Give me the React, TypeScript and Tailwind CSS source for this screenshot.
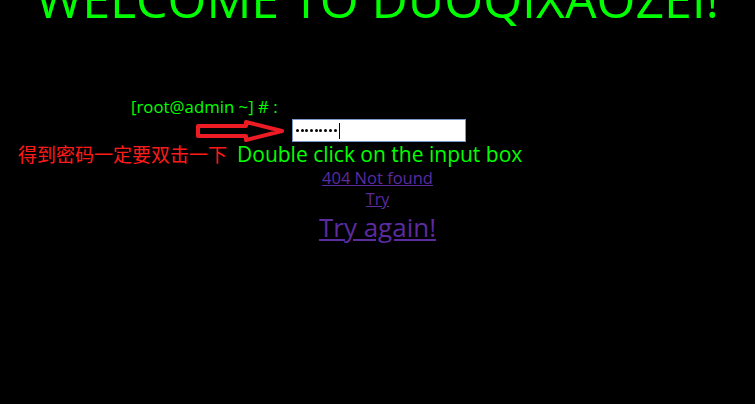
const dots = [0, 1, 2, 3, 4, 5, 6, 7, 8];

export default function App() {
  return (
    <div className="h-[404px] w-full overflow-hidden bg-black font-['Open_Sans','Noto_Sans',sans-serif]">
      {/* Title (cut off at the top edge) */}
      <h1 className="-mt-[31px] text-center text-[50px] leading-[60px] text-[#00ff00]">
        WELCOME TO DUOQIXAOZEI!
      </h1>

      {/* Prompt */}
      <div className="mt-[68px] pl-[131px] text-[16.8px] leading-[20px] text-[#00ff00]">
        [root@admin ~] # :
      </div>

      {/* Arrow + password input */}
      <div className="mt-[2px] flex items-center pl-[196px]">
        <svg width="90" height="22" viewBox="0 0 90 22" className="block">
          <path
            d="M2 6 H50 V2 L86 11 L50 20 V16 H2 Z"
            fill="none"
            stroke="#ed1c24"
            strokeWidth="4"
            strokeLinejoin="round"
          />
        </svg>
        <div className="ml-[6px] flex h-[23px] w-[174px] items-center border border-[#7a98c8] bg-white pl-[3px]">
          {dots.map((d) => (
            <span key={d} className="mr-[1.7px] h-[3px] w-[3px] rounded-full bg-black" />
          ))}
          <span className="ml-[1px] h-[16px] w-px bg-black" />
        </div>
      </div>

      {/* Hint */}
      <div className="flex items-baseline pl-[18px]">
        <span className="font-['Noto_Sans_CJK_SC',sans-serif] text-[19px] leading-[24px] text-[#ff1a1a]">
          得到密码一定要双击一下
        </span>
        <span className="ml-[10px] text-[21px] leading-[24px] text-[#00ff00]">
          Double click on the input box
        </span>
      </div>

      {/* Links */}
      <div className="mt-[2px] flex flex-col items-center text-[#5b2ba0]">
        <a href="#" className="text-[16.5px] leading-[20px] underline">
          404 Not found
        </a>
        <a href="#" className="text-[16px] leading-[22px] underline">
          Try
        </a>
        <a href="#" className="text-[26px] leading-[34px] underline">
          Try again!
        </a>
      </div>
    </div>
  );
}
